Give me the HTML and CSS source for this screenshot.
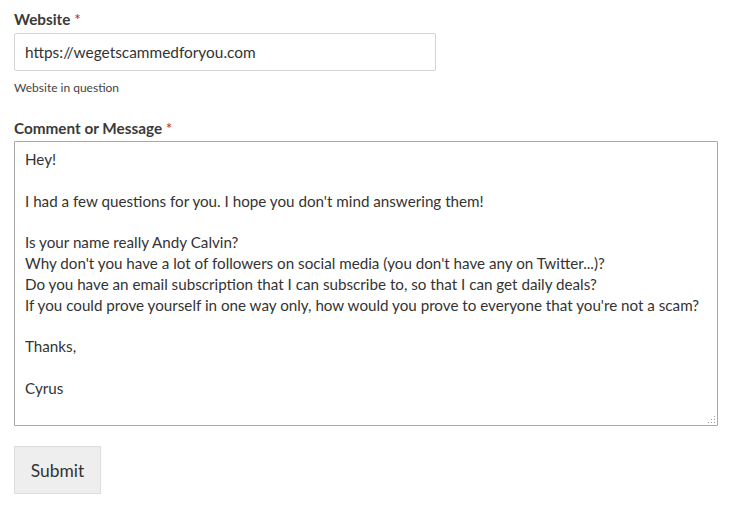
FILE: index.html
```html
<!DOCTYPE html>
<html>
<head>
<meta charset="utf-8">
<link rel="stylesheet" href="styles.css">
</head>
<body>
<form class="form">
  <div class="field">
    <label class="label">Website <span class="req">*</span></label>
    <input class="input" type="text" value="https://wegetscammedforyou.com">
    <div class="help">Website in question</div>
  </div>
  <div class="field">
    <label class="label label-tight">Comment or Message <span class="req">*</span></label>
    <div class="ta-wrap">
      <textarea class="textarea">Hey!

I had a few questions for you. I hope you don't mind answering them!

Is your name really Andy Calvin?
Why don't you have a lot of followers on social media (you don't have any on Twitter...)?
Do you have an email subscription that I can subscribe to, so that I can get daily deals?
If you could prove yourself in one way only, how would you prove to everyone that you're not a scam?

Thanks,

Cyrus</textarea>
      <svg class="grip" width="10" height="10" viewBox="0 0 10 10">
        <rect x="8" y="2" width="1" height="1" fill="#9a9a9a"/>
        <rect x="5" y="5" width="1" height="1" fill="#9a9a9a"/>
        <rect x="8" y="5" width="1" height="1" fill="#9a9a9a"/>
        <rect x="2" y="8" width="1" height="1" fill="#9a9a9a"/>
        <rect x="5" y="8" width="1" height="1" fill="#9a9a9a"/>
        <rect x="8" y="8" width="1" height="1" fill="#9a9a9a"/>
      </svg>
    </div>
  </div>
  <button class="submit" type="button">Submit</button>
</form>
</body>
</html>
```
FILE: styles.css
```css
html, body {
  margin: 0;
  padding: 0;
  background: #fff;
}
body {
  font-family: Lato, "Liberation Sans", sans-serif;
  color: #333;
}
.form {
  padding: 9px 14px 0 14px;
  display: flex;
  flex-direction: column;
  align-items: flex-start;
}
.field {
  display: flex;
  flex-direction: column;
  align-items: flex-start;
}
.label {
  font-size: 15.3px;
  font-weight: 700;
  color: #3a3a3a;
  line-height: 20px;
  margin-bottom: 4px;
}
.label-tight {
  margin-bottom: 3px;
}
.req {
  color: #c0202a;
  font-weight: 400;
}
.input {
  box-sizing: border-box;
  width: 422px;
  height: 38px;
  border: 1px solid #d4d4d4;
  border-radius: 2px;
  padding: 0 10px;
  font-family: inherit;
  font-size: 15.4px;
  color: #333;
  margin: 0;
}
.help {
  font-size: 12px;
  color: #444;
  margin-top: 9px;
  line-height: 16px;
  margin-bottom: 22px;
}
.ta-wrap {
  position: relative;
  display: flex;
}
.textarea {
  box-sizing: border-box;
  width: 704px;
  height: 285px;
  border: 1px solid #a8a8a8;
  border-radius: 1px;
  padding: 7px 10px;
  font-family: inherit;
  font-size: 15.2px;
  line-height: 20.8px;
  color: #333;
  margin: 0;
  resize: none;
  overflow: hidden;
}
.grip {
  position: absolute;
  right: 2px;
  bottom: 2px;
}
.submit {
  margin-top: 20px;
  box-sizing: border-box;
  width: 87px;
  height: 48px;
  background: #eeeeee;
  border: 1px solid #dddddd;
  border-radius: 0;
  font-family: inherit;
  font-size: 17.4px;
  color: #333;
  padding: 0;
}
```
